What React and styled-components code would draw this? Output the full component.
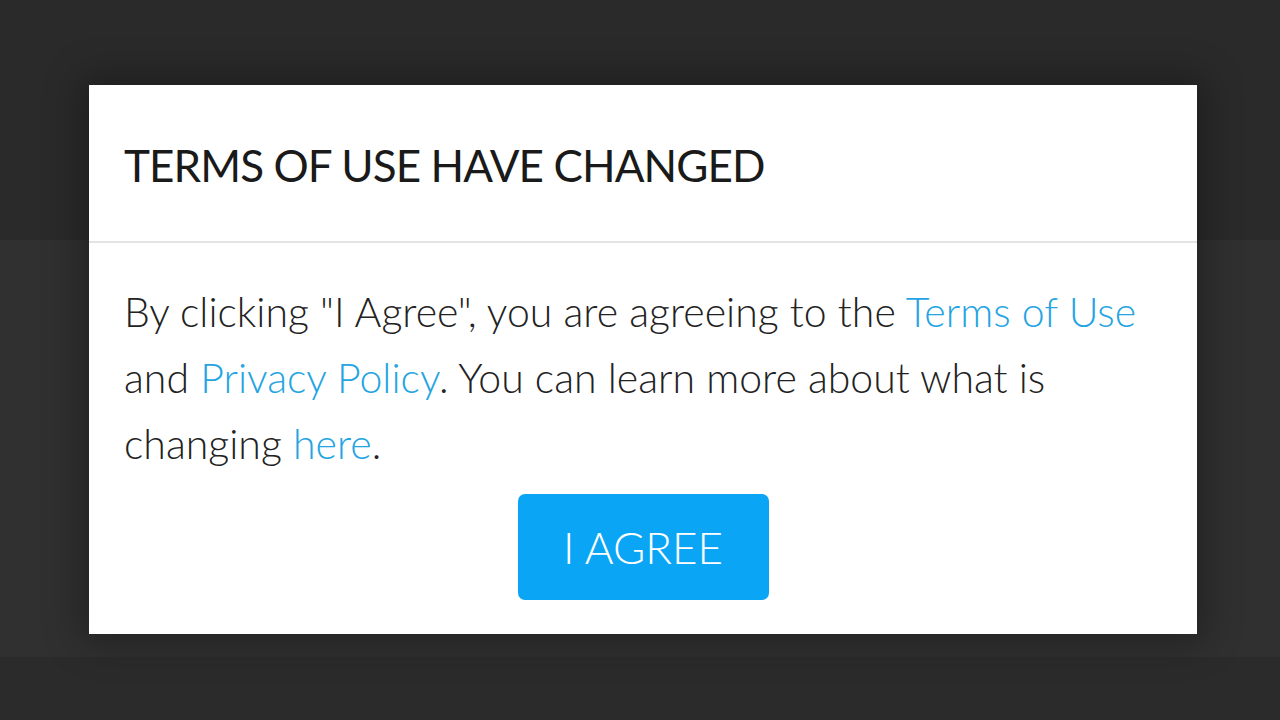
import styled, { createGlobalStyle } from "styled-components";

const GlobalStyle = createGlobalStyle`
    html, body {
        margin: 0;
        padding: 0;
        background-color: #2a2a2a;
    }

    #root {
        width: 1280px;
        height: 720px;
        overflow: hidden;
    }
`;

export default function App() {
    return (
        <>
            <GlobalStyle />
            <Screen>
                <TopStrip />
                <MiddleBand />
                <BottomStrip />
                <Dialog role="dialog" aria-labelledby="terms-title">
                    <Header>
                        <Title id="terms-title">TERMS OF USE HAVE CHANGED</Title>
                    </Header>
                    <Body>
                        <Message>
                            By clicking "I Agree", you are agreeing to the{" "}
                            <Link href="#terms">Terms of Use</Link> and{" "}
                            <Link href="#privacy">Privacy Policy</Link>. You can
                            learn more about what is changing{" "}
                            <Link href="#changes">here</Link>.
                        </Message>
                        <AgreeButton type="button">I AGREE</AgreeButton>
                    </Body>
                </Dialog>
            </Screen>
        </>
    );
}

const Screen = styled.div`
    position: relative;
    display: flex;
    flex-direction: column;
    width: 1280px;
    height: 720px;
    font-family: Lato, "Source Sans Pro", "Open Sans", sans-serif;
`;

const TopStrip = styled.div`
    height: 240px;
    background-color: #2a2a2a;
`;

const MiddleBand = styled.div`
    height: 417px;
    background-color: #303030;
`;

const BottomStrip = styled.div`
    flex-grow: 1;
    background-color: #2b2b2b;
`;

const Dialog = styled.div`
    position: absolute;
    left: 89px;
    top: 85px;
    width: 1108px;
    height: 549px;
    display: flex;
    flex-direction: column;
    background-color: #fff;
    box-shadow: 0 0 36px 8px rgba(0, 0, 0, 0.3);
`;

const Header = styled.div`
    height: 158px;
    box-sizing: border-box;
    display: flex;
    align-items: center;
    padding: 4px 35px 0;
    border-bottom: 2px solid #e4e4e4;
`;

const Title = styled.h1`
    margin: 0;
    font-size: 44px;
    font-weight: 400;
    color: #1a1a1a;
    letter-spacing: -0.9px;
`;

const Body = styled.div`
    flex-grow: 1;
    display: flex;
    flex-direction: column;
    align-items: center;
    padding: 36px 35px 0;
`;

const Message = styled.p`
    margin: 0;
    align-self: stretch;
    font-size: 41px;
    font-weight: 300;
    line-height: 66px;
    color: #222;
`;

const Link = styled.a`
    color: #24a4e2;
    text-decoration: none;
`;

const AgreeButton = styled.button`
    margin-top: 17px;
    width: 251px;
    height: 106px;
    border: none;
    border-radius: 7px;
    background-color: #0aa6f5;
    color: #fff;
    font-family: inherit;
    font-size: 44px;
    font-weight: 300;
    cursor: pointer;
`;
